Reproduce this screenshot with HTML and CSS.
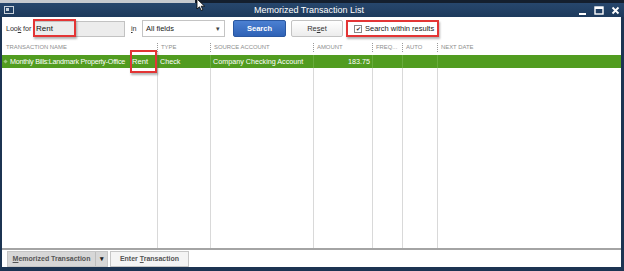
FILE: index.html
```html
<!DOCTYPE html>
<html lang="en">
<head>
    <meta charset="UTF-8">
    <title>Memorized Transaction List</title>
    <link rel="stylesheet" href="styles.css">
</head>
<body>
    <div class="window">
        <div class="topstrip"><div class="strip-left"></div><div class="strip-right"></div></div>
        <div class="titlebar">
            <svg class="winicon" width="10" height="8" viewBox="0 0 10 8">
                <rect x="0.5" y="0.5" width="9" height="7" fill="none" stroke="#c9d2dc"/>
                <rect x="2" y="2" width="3" height="3" fill="#c9d2dc"/>
            </svg>
            <div class="title">Memorized Transaction List</div>
            <div class="controls">
                <svg width="9" height="9" viewBox="0 0 9 9"><rect x="1" y="7" width="7" height="2" fill="#fff"/></svg>
                <svg width="10" height="9" viewBox="0 0 10 9"><rect x="1" y="1" width="8" height="7" fill="none" stroke="#fff" stroke-width="1.4"/><rect x="1" y="1" width="8" height="2" fill="#fff"/></svg>
                <svg width="9" height="9" viewBox="0 0 9 9"><path d="M1.5 1.5 L7.5 7.5 M7.5 1.5 L1.5 7.5" stroke="#fff" stroke-width="1.8"/></svg>
            </div>
        </div>

        <div class="content">
            <div class="searchbar">
                <span class="lbl lookfor">Loo<u>k</u> for</span>
                <div class="textbox">Rent</div>
                <span class="lbl inlbl"><u>i</u>n</span>
                <div class="select">All fields <span class="caret">&#9662;</span></div>
                <div class="btn btn-blue">Search</div>
                <div class="btn btn-plain">Re<u>s</u>et</div>
                <label class="check"><span class="box">&#10004;</span>Search within results</label>
            </div>

            <div class="list">
                <div class="hcell first">Transaction Name</div>
                <div class="hcell">Type</div>
                <div class="hcell">Source Account</div>
                <div class="hcell">Amount</div>
                <div class="hcell">Freq...</div>
                <div class="hcell">Auto</div>
                <div class="hcell">Next Date</div>

                <div class="rcell first"><span class="dot"></span><span class="name">Monthly Bills:Landmark Property-Office</span><span class="rent">Rent</span></div>
                <div class="rcell">Check</div>
                <div class="rcell">Company Checking Account</div>
                <div class="rcell num">183.75</div>
                <div class="rcell"></div>
                <div class="rcell"></div>
                <div class="rcell"></div>

                <div class="fcell first"></div>
                <div class="fcell"></div>
                <div class="fcell"></div>
                <div class="fcell"></div>
                <div class="fcell"></div>
                <div class="fcell"></div>
                <div class="fcell"></div>
            </div>

            <div class="footer">
                <div class="fbtn fbtn-menu"><span class="fbtn-label"><u>M</u>emorized Transaction</span><span class="fbtn-arrow">&#9662;</span></div>
                <div class="fbtn fbtn-enter">Enter <u>T</u>ransaction</div>
            </div>
        </div>
    </div>

    <!-- annotation boxes drawn over the screenshot -->
    <div class="mark mark-input"></div>
    <div class="mark mark-check"></div>
    <div class="mark mark-rent"></div>

    <svg class="cursor" width="10" height="12" viewBox="0 0 10 12">
        <path d="M1 0 L1 10 L3.5 7.8 L5.2 11.5 L6.8 10.8 L5.2 7.2 L8.6 7.2 Z" fill="#fff" stroke="#000" stroke-width="0.8"/>
    </svg>
</body>
</html>
```

FILE: styles.css
```css
body {
    margin: 0;
    width: 624px;
    height: 271px;
    overflow: hidden;
    position: relative;
    background: #1c3452;
    font-family: "Liberation Sans", Arial, sans-serif;
}
.window {
    display: flex;
    flex-direction: column;
    height: 271px;
}
.topstrip {
    height: 3px;
    display: flex;
}
.strip-left {
    width: 195px;
    background: #c6cacf;
}
.strip-right {
    flex: 1;
    background: #141f2e;
}
.titlebar {
    height: 14px;
    display: flex;
    align-items: center;
    padding: 0 4px 0 4px;
    background: linear-gradient(#27476d, #1d3a5c);
    color: #fff;
}
.winicon {
    display: block;
}
.title {
    flex: 1;
    text-align: center;
    font-size: 9px;
    padding-left: 26px;
}
.controls {
    display: flex;
    gap: 7px;
    align-items: center;
}
.controls svg {
    display: block;
}
.content {
    flex: 1;
    margin: 0 3px 4px 2px;
    background: #fff;
    display: flex;
    flex-direction: column;
}

/* search row */
.searchbar {
    height: 23px;
    display: flex;
    align-items: center;
    padding-left: 4px;
    font-size: 7.2px;
    color: #333;
    white-space: nowrap;
}
.lookfor {
    width: 27px;
    letter-spacing: -0.1px;
}
.textbox {
    width: 88px;
    height: 14px;
    background: #ececec;
    border: 1px solid #c2c2c2;
    padding-left: 2px;
    font-size: 8px;
    line-height: 14px;
    color: #111;
}
.inlbl {
    margin-left: 6px;
    width: 11px;
}
.select {
    width: 78px;
    height: 15px;
    border: 1px solid #c4c4c4;
    padding-left: 3px;
    line-height: 15px;
    font-size: 7.5px;
    color: #222;
    display: flex;
    justify-content: space-between;
}
.caret {
    padding-right: 4px;
    font-size: 7px;
    color: #444;
}
.btn {
    height: 15px;
    line-height: 15px;
    text-align: center;
    font-size: 7.5px;
    border-radius: 2px;
}
.btn-blue {
    margin-left: 8px;
    width: 51px;
    background: linear-gradient(#4b80d2, #2f62b6);
    border: 1px solid #2a57a0;
    color: #fff;
    font-weight: bold;
}
.btn-plain {
    margin-left: 5px;
    width: 50px;
    background: linear-gradient(#ffffff, #ececec);
    border: 1px solid #c3c3c3;
    color: #333;
}
.check {
    margin-left: 11px;
    display: flex;
    align-items: center;
    font-size: 7.5px;
    color: #222;
}
.box {
    width: 6px;
    height: 6px;
    border: 1px solid #888;
    margin-right: 3px;
    font-size: 6px;
    line-height: 6px;
    text-align: center;
    color: #333;
}

/* list */
.list {
    flex: 1;
    display: grid;
    grid-template-columns: 155px 53px 103px 59px 30px 35px 1fr;
    grid-template-rows: 15px 13px 1fr;
    border-bottom: 2px solid #a4a4a4;
}
.hcell {
    position: relative;
    padding-left: 4px;
    font-size: 5.9px;
    line-height: 15px;
    text-transform: uppercase;
    color: #8e8e8e;
    white-space: nowrap;
}
.hcell::before {
    content: "";
    position: absolute;
    left: 0;
    top: 3px;
    height: 9px;
    border-left: 1px dotted #9a9a9a;
}
.hcell.first::before {
    display: none;
}
.rcell {
    background: #519c20;
    color: #fff;
    font-size: 7.2px;
    line-height: 13px;
    padding-left: 2px;
    white-space: nowrap;
    overflow: hidden;
    border-left: 1px solid #68ab3c;
}
.rcell.first {
    border-left: none;
    display: flex;
    align-items: center;
    padding-left: 2px;
}
.rcell.num {
    text-align: right;
    padding-right: 2px;
}
.dot {
    width: 3px;
    height: 3px;
    background: #9cc77d;
    transform: rotate(45deg);
    margin-right: 3px;
}
.name {
    letter-spacing: -0.25px;
}
.rent {
    margin-left: 7px;
    font-size: 7.6px;
}
.fcell {
    border-left: 1px solid #d9d9d9;
}
.fcell.first {
    border-left: none;
}

/* footer */
.footer {
    height: 17px;
    display: flex;
    align-items: center;
    padding-left: 5px;
}
.fbtn {
    height: 14px;
    line-height: 14px;
    font-size: 7px;
    font-weight: bold;
    color: #555;
    border: 1px solid #c6c6c6;
}
.fbtn-menu {
    width: 99px;
    display: flex;
    background: #d7d7d7;
}
.fbtn-label {
    flex: 1;
    text-align: center;
}
.fbtn-arrow {
    width: 11px;
    border-left: 1px solid #bdbdbd;
    text-align: center;
    color: #222;
}
.fbtn-enter {
    margin-left: 2px;
    width: 77px;
    text-align: center;
    background: #f4f4f4;
}

/* red annotation boxes */
.mark {
    position: absolute;
    border: 2px solid #e33535;
    box-shadow: 1px 2px 2px rgba(0, 0, 0, 0.3);
}
.mark-input {
    left: 33px;
    top: 19px;
    width: 39px;
    height: 14px;
}
.mark-check {
    left: 346px;
    top: 20px;
    width: 89px;
    height: 13px;
}
.mark-rent {
    left: 130px;
    top: 50px;
    width: 23px;
    height: 19px;
}
.cursor {
    position: absolute;
    left: 196px;
    top: -1px;
}
```
